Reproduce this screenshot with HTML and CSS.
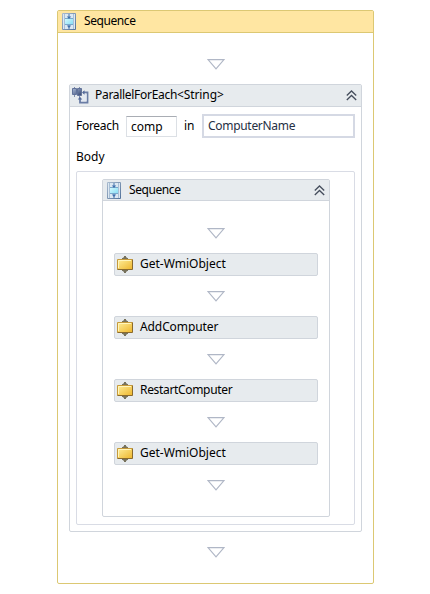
FILE: index.html
```
<!DOCTYPE html>
<html lang="en">
<head>
<meta charset="utf-8">
<title>Workflow designer</title>
<link rel="stylesheet" href="styles.css">
</head>
<body>
<svg class="defs" width="0" height="0" aria-hidden="true">
  <defs>
    <linearGradient id="frame" x1="0" y1="0" x2="1" y2="1"><stop offset="0" stop-color="#a9bace"/><stop offset="1" stop-color="#53739b"/></linearGradient>
    <linearGradient id="cyan" x1="0" y1="0" x2="1" y2="1"><stop offset="0" stop-color="#d8fbff"/><stop offset="1" stop-color="#83dcf3"/></linearGradient>
    <linearGradient id="gold" x1="0" y1="0" x2="1" y2="1"><stop offset="0" stop-color="#ffef9c"/><stop offset="1" stop-color="#edb52b"/></linearGradient>
    <linearGradient id="steel" x1="0" y1="0" x2="1" y2="1"><stop offset="0" stop-color="#a9b8d4"/><stop offset="1" stop-color="#34456f"/></linearGradient>
    <symbol id="seq" viewBox="0 0 14 17">
      <path d="M.5.5h13v16H.5z" fill="#dce8f2" stroke="url(#frame)"/>
      <path d="M3 5h8v7H3z" fill="url(#cyan)"/>
      <path d="M2.500 1v15M11.500 1v15" stroke="#a9bfd5"/>
      <path d="M3 5.500h8M3 11.500h8" stroke="#78a9cc"/>
      <path d="M7 1v4M7 12v4" stroke="#4774aa"/>
      <path d="M4.800 3.500h4.400L7 6zM4.800 12.500h4.400L7 15z" fill="#3f70ad"/>
    </symbol>
    <symbol id="par" viewBox="0 0 17 17">
      <path d="M2.500 0v10M7.500 0v11" stroke="#7f8dab"/>
      <path d="M.5 1.500h4v6h-4zM5.500 1.500h4v7h-4z" fill="url(#steel)" stroke="#62739a"/>
      <path d="M11 5.500h4.500v10H8v-4" fill="none" stroke="#6a7da5" stroke-width="1.800"/>
      <path d="M11 6.500h3.600v8H9v-3h2z" fill="#e3e9f2"/>
      <path d="M5.800 12.500L8 9.800l2.200 2.700z" fill="#53699a"/>
      <path d="M12.500 3.200L10 5.500l2.500 2.300z" fill="#53699a"/>
    </symbol>
    <symbol id="act" viewBox="0 0 16 17">
      <path d="M8 0v17" stroke="#77725c" stroke-width="2"/>
      <path d="M5 2.500l2-1.500h2l2 1.500zM5 14.500l2 1.500h2l2-1.500z" fill="#77725c"/>
      <path d="M5 2.500h6M5 14.500h6" stroke="#77725c"/>
      <path d="M.5 3.500h15v10H.5z" fill="url(#gold)"/>
      <path d="M.5 13.500v-10h15" fill="none" stroke="#c69a3b"/>
      <path d="M.5 13.500h15v-10" fill="none" stroke="#8a6a2c"/>
      <path d="M1.500 12V4.500h12.500" fill="none" stroke="#fff6bd"/>
    </symbol>
    <symbol id="tri" viewBox="0 0 18 11"><path d="M1 .6h16L9 9.800z" fill="#fff" stroke="#b0b7c6" stroke-width="1.200"/></symbol>
    <symbol id="fold" viewBox="0 0 11 11"><path d="M.8 5.500l4.700-4.500 4.700 4.500M.8 10l4.700-4.500 4.700 4.500" fill="none" stroke="#454d5c" stroke-width="1.300"/></symbol>
  </defs>
</svg>
<main class="card root">
  <header class="bar gold"><svg class="seq"><use href="#seq"/></svg><span class="sequence">Sequence</span></header>
  <svg class="tri first"><use href="#tri"/></svg>
  <section class="card parallel">
    <header class="bar"><svg class="par"><use href="#par"/></svg><span class="par-title">ParallelForEach<span class="type">&lt;String&gt;</span></span><svg class="fold"><use href="#fold"/></svg></header>
    <div class="fields"><span class="foreach">Foreach</span><span class="field name"><span>comp</span></span><span class="in">in</span><span class="field value"><span>ComputerName</span></span></div>
    <div class="label">Body</div>
    <div class="card body-box">
      <section class="card inner">
        <header class="bar"><svg class="seq"><use href="#seq"/></svg><span class="sequence">Sequence</span><svg class="fold"><use href="#fold"/></svg></header>
        <div class="steps">
          <svg class="tri"><use href="#tri"/></svg>
          <div class="card step"><svg class="act"><use href="#act"/></svg><span class="wmi">Get-WmiObject</span></div>
          <svg class="tri"><use href="#tri"/></svg>
          <div class="card step"><svg class="act"><use href="#act"/></svg><span class="add">AddComputer</span></div>
          <svg class="tri"><use href="#tri"/></svg>
          <div class="card step"><svg class="act"><use href="#act"/></svg><span class="restart">RestartComputer</span></div>
          <svg class="tri"><use href="#tri"/></svg>
          <div class="card step"><svg class="act"><use href="#act"/></svg><span class="wmi">Get-WmiObject</span></div>
          <svg class="tri"><use href="#tri"/></svg>
        </div>
      </section>
    </div>
  </section>
  <svg class="tri last"><use href="#tri"/></svg>
</main>
</body>
</html>
```
FILE: styles.css
```
* { box-sizing: border-box; }
body { margin: 0; padding: 10px 0 0 57px; background: #fff; color: #000; font: 12px/16px "Noto Sans", "Open Sans", sans-serif; }
svg { display: block; flex: none; }
.defs { position: absolute; }
span { white-space: nowrap; }
.card { border: 1px solid #d0d5dc; border-radius: 2px; background: #fff; }
.root { width: 317px; height: 574px; border-color: #dcc873; }
.bar { display: flex; height: 22px; padding: 0 4px 2px; align-items: center; background: #e7ebee; border-bottom: 1px solid #d0d5dc; }
.gold { background: #ffe6a2; border-color: #dcc873; }
.seq { width: 14px; height: 17px; margin-right: 8px; }
.root > .bar .seq { margin-top: 2px; }
.inner .seq { margin-top: 2px; }
.inner > .bar { height: 21px; padding-bottom: 1px; }
.sequence { letter-spacing: -.42px; }
.par-title { letter-spacing: -.3px; }
.type { letter-spacing: -.1px; }
.fold { width: 11px; height: 11px; margin: 2px 0 0 auto; }
.tri { width: 18px; height: 11px; margin: 0 auto; }
.first { margin: 26px 0 0 149px; }
.last { margin: 15px 0 0 149px; }
.parallel { width: 293px; height: 448px; margin: 14px 0 0 11px; }
.par { width: 17px; height: 17px; margin: 2px 6px 0 -2px; }
.fields { display: flex; height: 24px; margin: 7px 0 0 6px; }
.foreach { width: 50px; padding-top: 4px; letter-spacing: -.3px; }
.field { display: block; border: 1px solid #dce0e5; background: #fff; }
.name { width: 51px; height: 21px; margin-top: 2px; padding: 2px 4px; border-top-color: #a9adb4; }
.in { width: 25px; padding: 4px 0 0 7px; }
.value { width: 153px; height: 24px; padding: 2px 4px; border: 2px solid #d5d9e4; color: #263044; letter-spacing: -.3px; }
.label { margin: 11px 0 0 6px; height: 16px; }
.body-box { width: 279px; height: 354px; margin: 6px 0 0 6px; padding: 7px 0 0 25px; border-color: #d9dce5; }
.inner { width: 228px; height: 338px; }
.steps { padding: 27px 11px 0; }
.step { display: flex; align-items: center; height: 23px; margin: 14px 0 15px; padding: 0 2px 1px; background: #e7ebee; }
.act { width: 16px; height: 17px; margin: 1px 7px 0 0; }
.add { letter-spacing: -.1px; }
.restart { letter-spacing: -.33px; }
```
